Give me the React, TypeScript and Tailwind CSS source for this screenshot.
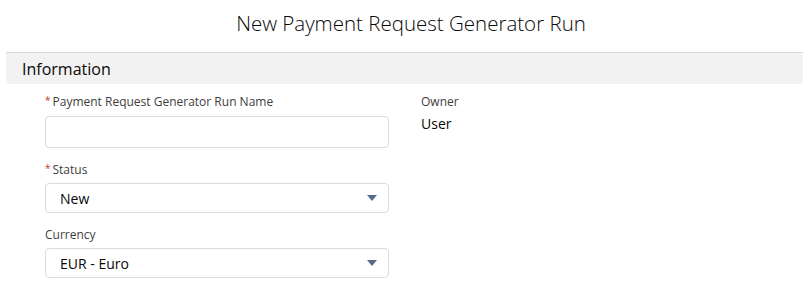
export default function App() {
  const fonts = { fontFamily: '"Open Sans", "Noto Sans", sans-serif' };

  return (
    <div className="w-[811px] h-[289px] bg-white text-[#080707] overflow-hidden" style={fonts}>
      <div className="h-[52px] flex items-center justify-center pl-[11px]">
        <h1 className="text-[20.5px] font-light text-[#080707] leading-none pb-[6px]">New Payment Request Generator Run</h1>
      </div>

      <div className="ml-[6px] mr-[8px] h-[32px] bg-[#f3f2f2] border-t border-[#dddbda] rounded-b-[4px] flex items-center pl-[16px]">
        <h2 className="text-[16px] leading-none text-[#080707]">Information</h2>
      </div>

      <div className="flex pl-[45px] pt-[9px]">
        <div className="w-[344px] flex flex-col gap-[13px]">
          <div>
            <label className="flex items-center h-[18px] text-[12px] text-[#3e3e3c]">
              <span className="text-[#c23934] mr-[2px] text-[10px] -mt-[3px]">*</span>
              Payment Request Generator Run Name
            </label>
            <div className="mt-[5px] h-[32px] border border-[#dddbda] rounded-[4px] bg-white" />
          </div>

          <div>
            <label className="flex items-center h-[18px] text-[12px] text-[#3e3e3c]">
              <span className="text-[#c23934] mr-[2px] text-[10px] -mt-[3px]">*</span>
              Status
            </label>
            <Select value="New" />
          </div>

          <div>
            <label className="flex items-center h-[18px] text-[12px] text-[#3e3e3c]">Currency</label>
            <Select value="EUR - Euro" />
          </div>
        </div>

        <div className="ml-[32px]">
          <div className="h-[18px] flex items-center text-[12px] text-[#3e3e3c]">Owner</div>
          <div className="mt-[3px] text-[14px] leading-[20px] text-[#080707]">User</div>
        </div>
      </div>
    </div>
  );
}

function Select({ value }: { value: string }) {
  return (
    <div className="mt-[4px] h-[30px] border border-[#dddbda] rounded-[4px] bg-white flex items-center justify-between pl-[14px] pr-[10px]">
      <span className="text-[14px] text-[#080707]">{value}</span>
      <svg width="10" height="6" viewBox="0 0 10 6" className="mr-[1px]">
        <path d="M0 0 H10 L5 6 Z" fill="#54698d" />
      </svg>
    </div>
  );
}
